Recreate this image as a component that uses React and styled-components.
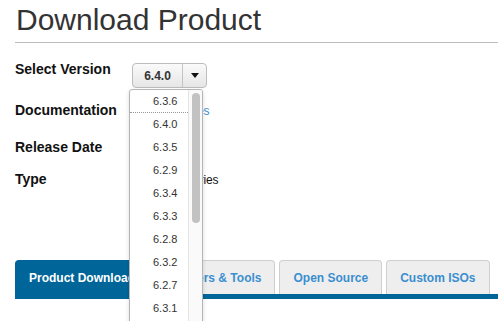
import React from "react";
import styled, { createGlobalStyle } from "styled-components";

const GlobalStyle = createGlobalStyle`
  html, body {
    margin: 0;
    padding: 0;
    background: #fff;
    height: 100%;
  }
  body {
    font-family: "Liberation Sans", Arial, sans-serif;
    color: #111;
    overflow: hidden;
  }
`;

const Page = styled.div`
  padding: 0 0 0 15px;
  width: 600px;
  min-height: 340px;
`;

const Title = styled.h1`
  margin: 3px 0 0 1px;
  font-size: 30px;
  line-height: 34px;
  font-weight: normal;
  color: #333;
`;

const Rule = styled.hr`
  margin: 5px 0 0;
  border: none;
  border-top: 1px solid #bbb;
  height: 0;
`;

const Details = styled.div`
  display: grid;
  grid-template-columns: 117px auto;
  grid-template-rows: 41px 37px 32px 16px;
  margin-top: 18px;
  align-items: baseline;
`;

const Label = styled.div`
  font-size: 14px;
  line-height: 16px;
  font-weight: bold;
  color: #111;
`;

const Value = styled.div`
  font-size: 12px;
  line-height: 16px;
  letter-spacing: -0.1px;
  color: #111;
`;

const Link = styled.a`
  color: #3b8ed0;
  text-decoration: none;
`;

const SelectWrap = styled.div`
  position: relative;
  align-self: start;
  margin-top: 2px;
  width: 75px;
`;

const SelectButton = styled.div`
  display: flex;
  height: 25px;
  box-sizing: border-box;
  border: 1px solid #bdbdbd;
  border-radius: 4px;
  background: linear-gradient(#fafafa, #e6e6e6);
`;

const SelectValue = styled.div`
  width: 49px;
  display: flex;
  align-items: center;
  justify-content: center;
  font-size: 12px;
  font-weight: bold;
  color: #333;
  border-right: 1px solid #c4c4c4;
`;

const SelectArrow = styled.div`
  flex: 1;
  display: flex;
  align-items: center;
  justify-content: center;
  &::after {
    content: "";
    border-left: 4px solid transparent;
    border-right: 4px solid transparent;
    border-top: 5px solid #111;
  }
`;

const List = styled.div`
  position: absolute;
  left: -3px;
  top: 26px;
  width: 74px;
  height: 245px;
  box-sizing: border-box;
  border: 1px solid #b5b5b5;
  border-radius: 3px;
  background: #fff;
  display: flex;
  overflow: hidden;
  box-shadow: 0 2px 4px rgba(0, 0, 0, 0.15);
  z-index: 5;
`;

const Options = styled.div`
  flex: 1;
`;

const Option = styled.div`
  height: 23px;
  box-sizing: border-box;
  line-height: 23px;
  padding-left: 23px;
  font-size: 11px;
  color: #333;
  border-bottom: ${(p) => (p.$first ? "1px dotted #999" : "none")};
`;

const Track = styled.div`
  width: 14px;
  border-left: 1px solid #e4e4e4;
  background: #fafafa;
  padding: 3px 3px 0 3px;
  box-sizing: border-box;
`;

const Thumb = styled.div`
  width: 8px;
  height: 130px;
  border-radius: 4px;
  background: #c2c2c2;
`;

const TabBar = styled.div`
  display: flex;
  gap: 4px;
  margin-top: 73px;
  border-bottom: 5px solid #00669a;
`;

const Tab = styled.div`
  height: 34px;
  box-sizing: border-box;
  padding: 0 13px;
  display: flex;
  align-items: center;
  font-size: 12px;
  font-weight: bold;
  white-space: nowrap;
  border: 1px solid ${(p) => (p.$active ? "#00669a" : "#cfcfcf")};
  border-bottom: none;
  border-radius: 4px 4px 0 0;
  background: ${(p) => (p.$active ? "#00669a" : "#eeeeee")};
  color: ${(p) => (p.$active ? "#fff" : "#3b8ed0")};
`;

const versions = [
  "6.3.6",
  "6.4.0",
  "6.3.5",
  "6.2.9",
  "6.3.4",
  "6.3.3",
  "6.2.8",
  "6.3.2",
  "6.2.7",
  "6.3.1",
];

const tabs = ["Product Downloads", "Drivers & Tools", "Open Source", "Custom ISOs"];

export default function App() {
  return (
    <Page>
      <GlobalStyle />
      <Title>Download Product</Title>
      <Rule />
      <Details>
        <Label>Select Version</Label>
        <SelectWrap>
          <SelectButton>
            <SelectValue>6.4.0</SelectValue>
            <SelectArrow />
          </SelectButton>
          <List>
            <Options>
              {versions.map((v, i) => (
                <Option key={v} $first={i === 0}>
                  {v}
                </Option>
              ))}
            </Options>
            <Track>
              <Thumb />
            </Track>
          </List>
        </SelectWrap>
        <Label>Documentation</Label>
        <Value>
          <Link href="#">Release Notes</Link>
        </Value>
        <Label>Release Date</Label>
        <Value>2019-04-11</Value>
        <Label>Type</Label>
        <Value>Product Binaries</Value>
      </Details>
      <TabBar>
        {tabs.map((t, i) => (
          <Tab key={t} $active={i === 0}>
            {t}
          </Tab>
        ))}
      </TabBar>
    </Page>
  );
}
